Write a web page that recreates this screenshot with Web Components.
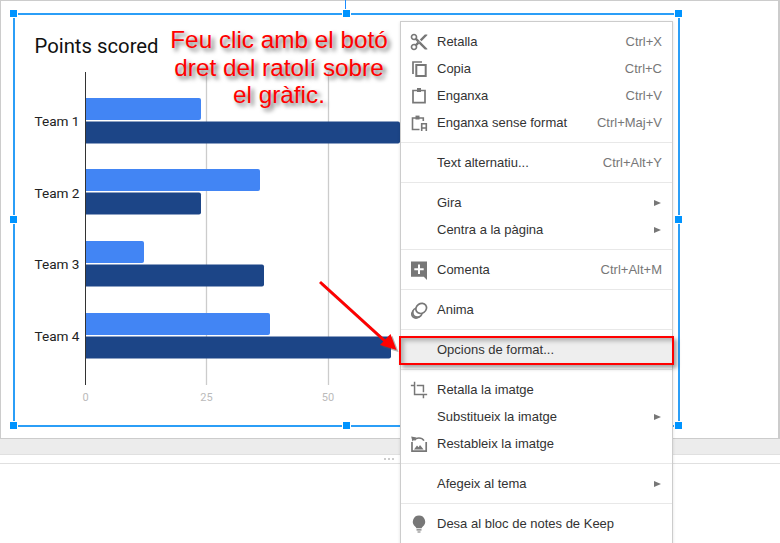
<!DOCTYPE html>
<html lang="ca">
<head>
<meta charset="utf-8">
<title>Opcions de format</title>
<style>
  html, body { margin: 0; padding: 0; height: 100%; overflow: hidden; background: #fff; }
</style>
</head>
<body>
<slides-page>
  <slide-canvas>
    <bar-chart></bar-chart>
    <selection-frame></selection-frame>
    <hint-note>Feu clic amb el botó<br>dret del ratolí sobre<br>el gràfic.</hint-note>
    <context-menu>
      <menu-item icon="cut" shortcut="Ctrl+X">Retalla</menu-item>
      <menu-item icon="copy" shortcut="Ctrl+C">Copia</menu-item>
      <menu-item icon="paste" shortcut="Ctrl+V">Enganxa</menu-item>
      <menu-item icon="pasteplain" shortcut="Ctrl+Maj+V">Enganxa sense format</menu-item>
      <menu-sep></menu-sep>
      <menu-item shortcut="Ctrl+Alt+Y">Text alternatiu...</menu-item>
      <menu-sep></menu-sep>
      <menu-item submenu>Gira</menu-item>
      <menu-item submenu>Centra a la pàgina</menu-item>
      <menu-sep></menu-sep>
      <menu-item icon="comment" shortcut="Ctrl+Alt+M">Comenta</menu-item>
      <menu-sep></menu-sep>
      <menu-item icon="animate">Anima</menu-item>
      <menu-sep></menu-sep>
      <menu-item selected>Opcions de format...</menu-item>
      <menu-sep></menu-sep>
      <menu-item icon="crop">Retalla la imatge</menu-item>
      <menu-item submenu>Substitueix la imatge</menu-item>
      <menu-item icon="reset">Restableix la imatge</menu-item>
      <menu-sep></menu-sep>
      <menu-item submenu>Afegeix al tema</menu-item>
      <menu-sep></menu-sep>
      <menu-item icon="bulb">Desa al bloc de notes de Keep</menu-item>
    </context-menu>
    <red-callout></red-callout>
  </slide-canvas>
  <notes-strip></notes-strip>
</slides-page>

<script>
// icons are drawn in a 20x20 box
const ICONS = {
  cut: `<svg viewBox="0 0 24 24"><path fill="#777" d="M9.64 7.64c.23-.5.36-1.05.36-1.64 0-2.21-1.79-4-4-4S2 3.79 2 6s1.79 4 4 4c.59 0 1.14-.13 1.64-.36L10 12l-2.36 2.36C7.14 14.13 6.59 14 6 14c-2.21 0-4 1.79-4 4s1.79 4 4 4 4-1.79 4-4c0-.59-.13-1.14-.36-1.64L12 14l7 7h3v-1L9.64 7.64zM6 8c-1.1 0-2-.89-2-2s.9-2 2-2 2 .89 2 2-.9 2-2 2zm0 12c-1.1 0-2-.89-2-2s.9-2 2-2 2 .89 2 2-.9 2-2 2zm6-7.5c-.28 0-.5-.22-.5-.5s.22-.5.5-.5.5.22.5.5-.22.5-.5.5zM19 3l-6 6 2 2 7-7V3z"/></svg>`,
  copy: `<svg viewBox="0 0 20 20"><path fill="none" stroke="#777" stroke-width="1.7" d="M4 15V3h9"/><path fill="none" stroke="#777" stroke-width="2" d="M7.3 6h9.4v11H7.3z"/></svg>`,
  paste: `<svg viewBox="0 0 20 20"><path fill="none" stroke="#777" stroke-width="1.7" d="M4 4.5h12v12.2H4z"/><path fill="#777" d="M8 2h4v4H8z"/></svg>`,
  pasteplain: `<svg viewBox="0 0 20 20"><path fill="none" stroke="#777" stroke-width="1.6" d="M10.5 16.5H3.5V5h10.8v3"/><path fill="#777" d="M6.5 2.6h4V6.5h-4z"/><path fill="none" stroke="#777" stroke-width="1.6" d="M12.7 18v-7.2h4.6V18M12.7 15h4.6"/></svg>`,
  comment: `<svg viewBox="0 0 20 20"><path fill="#777" d="M2 1.6h16V20l-3.2-3.2H2z"/><path fill="#fff" d="M9 4.5h2v3.7h3.7v2H11v3.7H9v-3.7H5.3v-2H9z"/></svg>`,
  animate: `<svg viewBox="0 0 20 20"><g fill="#fff" stroke="#777" stroke-width="1.7"><circle cx="7" cy="14" r="4.2"/><circle cx="8.4" cy="12.6" r="4.6"/><ellipse cx="12.2" cy="8.4" rx="5.6" ry="4.8" transform="rotate(-35 12.2 8.4)"/></g></svg>`,
  crop: `<svg viewBox="-1.5 -1.5 27 27"><path fill="#777" d="M19 15h-2V7H9V5h10zM7 17V1H5v4H1v2h4v12h12v4h2v-4h4v-2z"/></svg>`,
  reset: `<svg viewBox="0 0 20 20"><path fill="none" stroke="#777" stroke-width="1.7" d="M3 8v9.2h14.2V8"/><path fill="none" stroke="#777" stroke-width="1.6" d="M5.4 6.3C7 3.4 12.6 3 15 6.6"/><path fill="#777" d="M2.2 2.6L7.6 3.4 3.4 7.4zM5 15.4l3-4 1.6 1.8 1.4-2.2 3.6 4.4z"/></svg>`,
  bulb: `<svg viewBox="0 0 20 20"><path fill="#777" d="M10 1.5a6.2 6.2 0 0 0-3.6 11.2c.6.5.9 1 .9 1.6h5.4c0-.6.3-1.1.9-1.6A6.2 6.2 0 0 0 10 1.5zM7.5 15.3h5v1.2h-5zM8.5 17.4h3v1.1h-3z"/></svg>`
};

class SlidesPage extends HTMLElement {
  constructor() {
    super();
    this.attachShadow({ mode: 'open' });
    this.shadowRoot.innerHTML = `
      <style>
        :host { display: flex; flex-direction: column; width: 780px; height: 543px; overflow: hidden; background: #fff; }
      </style>
      <slot></slot>`;
  }
}

class SlideCanvas extends HTMLElement {
  constructor() {
    super();
    this.attachShadow({ mode: 'open' });
    this.shadowRoot.innerHTML = `
      <style>
        :host { display: block; position: relative; flex: none; box-sizing: border-box; width: 780px; height: 439px;
                background: #fff; border: 1px solid #ccc; border-right-width: 2px; border-left-width: 1px; }
      </style>
      <slot></slot>`;
  }
}

class BarChart extends HTMLElement {
  constructor() {
    super();
    this.attachShadow({ mode: 'open' });
    const teams = [
      { name: 'Team 1', y: 121.5, top: 98, a: 201, b: 400 },
      { name: 'Team 2', y: 193.5, top: 169, a: 260, b: 201 },
      { name: 'Team 3', y: 264.5, top: 241, a: 144, b: 264 },
      { name: 'Team 4', y: 336.5, top: 313, a: 270, b: 391 }
    ];
    const bar = (y, x2, color) =>
      `<path fill="${color}" d="M85 ${y}H${x2 - 2}q2 0 2 2V${y + 20}q0 2 -2 2H85z"/>`;
    const rows = teams.map(t => `
      <text x="34.5" y="${t.y + 4.5}" class="team">${t.name}</text>
      ${bar(t.top, t.a, '#4285f4')}
      ${bar(t.top + 23.5, t.b, '#1c4587')}`).join('');
    const ticks = [[85.5, '0'], [206.5, '25'], [328, '50']].map(([x, s]) =>
      `<text x="${x}" y="401" text-anchor="middle" class="tick">${s}</text>`).join('');
    this.shadowRoot.innerHTML = `
      <style>
        :host { display: block; position: absolute; left: -1px; top: -1px; width: 680px; height: 430px; }
        svg { display: block; }
        text { font-family: Roboto, "Liberation Sans", sans-serif; }
        .title { font-size: 20.3px; fill: #111; }
        .team { font-size: 13.6px; fill: #222; }
        .tick { font-size: 11px; fill: #bbb; }
      </style>
      <svg width="680" height="430" viewBox="0 0 680 430">
        <text x="34.5" y="53" class="title">Points scored</text>
        <path stroke="#ccc" stroke-width="1.3" d="M206.5 72V385M328.5 72V385M450.5 72V385"/>
        ${rows}
        <path stroke="#333" stroke-width="1" d="M85.5 72V385"/>
        ${ticks}
      </svg>`;
  }
}

class SelectionFrame extends HTMLElement {
  constructor() {
    super();
    this.attachShadow({ mode: 'open' });
    const spots = [[-5,-5],[328,-5],[660,-5],[-5,201],[660,201],[-5,407],[328,407],[660,407]];
    this.shadowRoot.innerHTML = `
      <style>
        :host { display: block; position: absolute; left: 12px; top: 12px; width: 667px; height: 414px;
                box-sizing: border-box; border: 2px solid #2b9ef7; }
        .handle { position: absolute; width: 7px; height: 7px; background: #0094ff;
                  box-shadow: 0 0 0 1px #fff; }
        .stem { position: absolute; left: 330px; top: -15px; width: 1px; height: 11px; background: #1a8cff; }
      </style>
      <div class="stem"></div>
      ${spots.map(([x, y]) => `<div class="handle" style="left:${x}px;top:${y}px"></div>`).join('')}`;
  }
}

class HintNote extends HTMLElement {
  constructor() {
    super();
    this.attachShadow({ mode: 'open' });
    this.shadowRoot.innerHTML = `
      <style>
        :host { display: block; position: absolute; left: 138px; top: 25px; width: 280px; text-align: center;
                font: 24.3px/27.5px "Liberation Sans", Arial, sans-serif; color: #f00;
                text-shadow: 3px 3px 4px #666; }
      </style>
      <slot></slot>`;
  }
}

class ContextMenu extends HTMLElement {
  constructor() {
    super();
    this.attachShadow({ mode: 'open' });
    this.shadowRoot.innerHTML = `
      <style>
        :host { display: flex; flex-direction: column; position: absolute; left: 399px; top: 20px; width: 273px;
                box-sizing: border-box; padding: 6px 0; background: #fff; border: 1px solid #ccc;
                box-shadow: 0 1px 3px rgba(0,0,0,.12); }
      </style>
      <slot></slot>`;
  }
}

class MenuItem extends HTMLElement {
  constructor() {
    super();
    this.attachShadow({ mode: 'open' });
  }
  connectedCallback() {
    const icon = ICONS[this.getAttribute('icon')] || '';
    const shortcut = this.getAttribute('shortcut') || '';
    const arrow = this.hasAttribute('submenu') ? '<span class="arrow"></span>' : '';
    this.shadowRoot.innerHTML = `
      <style>
        :host { display: grid; grid-template-columns: 20px 1fr auto; align-items: center; column-gap: 8px;
                height: 27px; padding: 0 10px 0 8px; flex: none;
                font: 13px "Liberation Sans", Arial, sans-serif; color: #333; }
        :host([selected]) { background: #eee; }
        .icon { width: 20px; height: 20px; }
        .icon svg { display: block; width: 20px; height: 20px; }
        .label { white-space: nowrap; }
        .key { color: #777; white-space: nowrap; }
        .arrow { display: block; width: 0; height: 0; margin-right: 1px; border-left: 7px solid #777;
                 border-top: 3.5px solid transparent; border-bottom: 3.5px solid transparent; }
      </style>
      <div class="icon">${icon}</div>
      <div class="label"><slot></slot></div>
      <div class="key">${shortcut}${arrow}</div>`;
  }
}

class MenuSep extends HTMLElement {
  constructor() {
    super();
    this.attachShadow({ mode: 'open' });
    this.shadowRoot.innerHTML = `
      <style>
        :host { display: block; flex: none; height: 1px; margin: 6px 0; background: #e8e8e8; }
      </style>`;
  }
}

// the red arrow and the red box painted over the screenshot
class RedCallout extends HTMLElement {
  constructor() {
    super();
    this.attachShadow({ mode: 'open' });
    this.shadowRoot.innerHTML = `
      <style>
        :host { display: block; position: absolute; left: -1px; top: -1px; width: 780px; height: 439px; pointer-events: none; }
        .box { position: absolute; left: 399px; top: 336px; width: 271px; height: 25px; border: 2px solid #f00;
               box-shadow: 3px 3px 4px rgba(0,0,0,.35), inset 3px 3px 4px rgba(0,0,0,.25); }
        svg { position: absolute; left: 0; top: 0; overflow: visible; }
      </style>
      <div class="box"></div>
      <svg width="780" height="439">
        <g transform="translate(2 2)" fill="#555" stroke="#555" opacity=".45">
          <path stroke-width="3" d="M320 282L386 342"/>
          <path stroke="none" d="M396.5 350L380 345 390.5 334z"/>
        </g>
        <path stroke="#f00" stroke-width="3" d="M320 282L386 342"/>
        <path fill="#f00" d="M396.5 350L380 345 390.5 334z"/>
      </svg>`;
  }
}

class NotesStrip extends HTMLElement {
  constructor() {
    super();
    this.attachShadow({ mode: 'open' });
    this.shadowRoot.innerHTML = `
      <style>
        :host { display: flex; flex-direction: column; flex: 1; background: #fff; }
        .band { height: 15px; background: #ececec; border-bottom: 1px solid #e0e0e0; }
        .grip { height: 8px; display: flex; justify-content: flex-end; align-items: center; gap: 2px; padding-right: 386px; }
        .grip i { display: block; width: 2px; height: 2px; background: #ccc; }
        .rule { height: 1px; background: #e0e0e0; }
      </style>
      <div class="band"></div>
      <div class="grip"><i></i><i></i><i></i></div>
      <div class="rule"></div>`;
  }
}

customElements.define('slides-page', SlidesPage);
customElements.define('slide-canvas', SlideCanvas);
customElements.define('bar-chart', BarChart);
customElements.define('selection-frame', SelectionFrame);
customElements.define('hint-note', HintNote);
customElements.define('context-menu', ContextMenu);
customElements.define('menu-item', MenuItem);
customElements.define('menu-sep', MenuSep);
customElements.define('red-callout', RedCallout);
customElements.define('notes-strip', NotesStrip);
</script>
</body>
</html>
